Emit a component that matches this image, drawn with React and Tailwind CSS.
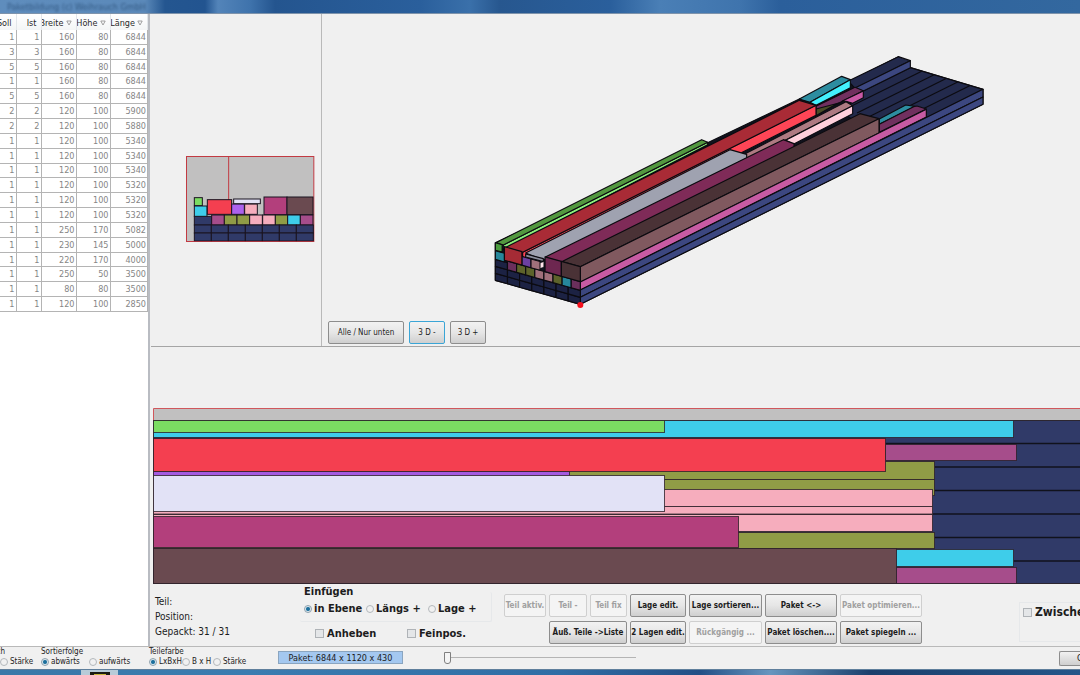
import React from "react";

const PARTS = [
  [1, 1, 160, 80, 6844],
  [3, 3, 160, 80, 6844],
  [5, 5, 160, 80, 6844],
  [1, 1, 160, 80, 6844],
  [5, 5, 160, 80, 6844],
  [2, 2, 120, 100, 5900],
  [2, 2, 120, 100, 5880],
  [1, 1, 120, 100, 5340],
  [1, 1, 120, 100, 5340],
  [1, 1, 120, 100, 5340],
  [1, 1, 120, 100, 5320],
  [1, 1, 120, 100, 5320],
  [1, 1, 120, 100, 5320],
  [1, 1, 250, 170, 5082],
  [1, 1, 230, 145, 5000],
  [1, 1, 220, 170, 4000],
  [1, 1, 250, 50, 3500],
  [1, 1, 80, 80, 3500],
  [1, 1, 120, 100, 2850],
];

const COLUMNS = [
  ["Soll", false],
  ["Ist", false],
  ["Breite", true],
  ["Höhe", true],
  ["Länge", true],
];

function PartsTable() {
  return (
    <table className="h-[298px] w-full table-fixed border-collapse text-[9px] leading-[12px] text-[#858585]">
      <colgroup>
        <col className="w-[16px]" />
        <col className="w-[25px]" />
        <col className="w-[35px]" />
        <col className="w-[34px]" />
        <col />
      </colgroup>
      <thead>
        <tr className="h-[16px] text-[#2a2a2a]">
          {COLUMNS.map(([name, sortable]) => (
            <th key={name} scope="col" className="overflow-hidden border-r border-[#e2e6ea] bg-gradient-to-b from-white to-[#f3f5f6] p-0 font-normal">
              <div className="flex items-center justify-end gap-[2px] overflow-hidden pt-[2px] pr-[4px]">
                <span className="flex min-w-0 justify-end overflow-hidden">{name}</span>
                {sortable && (
                  <svg viewBox="0 0 6 6" className="h-[6px] w-[6px] shrink-0" fill="none" stroke="#8a8a8a" strokeWidth=".8">
                    <path d="M.8 1h4.4L3 5z" />
                  </svg>
                )}
              </div>
            </th>
          ))}
        </tr>
      </thead>
      <tbody>
        {PARTS.map((row, i) => (
          <tr key={i}>
            {row.map((v, j) => (
              <td key={j} className="border-r border-b border-[#b4b4b4] p-0 pr-[1px] text-right">{v}</td>
            ))}
          </tr>
        ))}
      </tbody>
    </table>
  );
}

/* Cross-section of the package: [x, y, width, height, fill] */
const SECTION = [
  [43, 198, 52, 26, "#303a68"],
  [43, 142, 24, 24, "#7bdc62"],
  [43, 167, 38, 31, "#3ecdea"],
  [82, 148, 73, 44, "#f43f50"],
  [155, 161, 38, 31, "#ac62ee"],
  [194, 161, 38, 31, "#f6adbd"],
  [161, 146, 80, 14, "#e2e2f6"],
  [252, 140, 69, 53, "#b33f7c"],
  [321, 140, 78, 53, "#6a4a50"],
  [95, 194, 38, 30, "#a64d8b"],
  [133, 194, 38, 30, "#909c46"],
  [171, 194, 38, 30, "#909c46"],
  [209, 194, 38, 30, "#f6adbd"],
  [248, 194, 38, 30, "#f6adbd"],
  [286, 194, 37, 30, "#909c46"],
  [323, 194, 38, 30, "#3ecdea"],
  [361, 194, 38, 30, "#a64d8b"],
];

function SectionView() {
  return (
    <svg viewBox="18 17 387 258" className="h-[86px] w-[129px]" role="img" aria-label="Querschnitt">
      <rect x="19.5" y="18.5" width="382" height="255" fill="#c1c0c0" stroke="#c23a42" strokeWidth="3" />
      <path d="M146 18V150" stroke="#c23a42" strokeWidth="3" />
      <g stroke="#1b1420" strokeWidth="3">
        {SECTION.map(([x, y, w, h, c], i) => (
          <rect key={i} x={x} y={y} width={w} height={h} fill={c} />
        ))}
        {[224, 248].map((y) =>
          [0, 1, 2, 3, 4, 5, 6].map((n) => (
            <rect key={y + "-" + n} x={43 + n * 51} y={y} width="51" height="24" fill="#303a68" />
          ))
        )}
      </g>
      <path d="M18 273.5H402" stroke="#c23a42" strokeWidth="2" />
    </svg>
  );
}

/* Front-face parts: [offset across, width, base height, height, fill] */
const FRONT = [
  [0, 160, 160, 80, "#1c2243"],
  [160, 120, 160, 100, "#6a2f5c"],
  [280, 120, 160, 100, "#5d632b"],
  [400, 120, 160, 100, "#5d632b"],
  [520, 120, 160, 100, "#a0707a"],
  [640, 120, 160, 100, "#a0707a"],
  [760, 120, 160, 100, "#5d632b"],
  [880, 120, 160, 100, "#26879b"],
  [1000, 120, 160, 100, "#6a2f5c"],
  [0, 120, 240, 100, "#26879b"],
  [0, 90, 345, 85, "#4b9c3f"],
  [350, 120, 260, 100, "#6c40a0"],
  [470, 120, 260, 100, "#a0707a"],
  [120, 230, 260, 155, "#a52b35"],
  [655, 215, 260, 170, "#6d2750"],
  [870, 250, 260, 170, "#4a3236"],
];

function frontQuad(u, w, base, h) {
  const px = (a) => 31 + (255 * a) / 1120;
  const py = (a, z) => 706 + (72 * a) / 1120 - z * 0.262;
  return [
    [px(u), py(u, base)],
    [px(u + w), py(u + w, base)],
    [px(u + w), py(u + w, base + h)],
    [px(u), py(u, base + h)],
  ].map((p) => p.join(",")).join(" ");
}

/* Lengthwise faces from back to front */
const FACES = [
  ["31,593 31,706 286,778 1494,178 1494,133 1276,68 1100,150 680,293", "#11131f"],
  ["943,163 1090,112 1240,35 1276,68 1135,158 993,215", "#11131f"],
  ["660,297 943,162 960,180 690,310", "#11131f"],
  ["1276,68 1494,133 1324,218 1160,262 1090,215 1090,180 1135,138", "#232a4c"],
];
const SEAMS = [[1310, 79], [1346, 90], [1382, 101], [1418, 111], [1454, 122]];
const BLOCKS = [
  ["1090,108 1240,35 1276,47 1110,130", "#232a4c"],
  ["1276,47 1276,68 1135,138 1110,129", "#3c4780"],
  ["943,162 1070,94 1096,104 975,172", "#2d8da0"],
  ["1096,104 1096,128 993,181 975,172", "#43f0fc"],
  ["993,184 1110,127 1135,137 1062,174 993,202", "#71305f"],
  ["1135,138 1135,158 1103,175 1083,169 1072,168", "#ca5aa6"],
  ["993,192 1062,174 1040,185 993,212", "#4a4c27"],
  ["1183,222 1262,180 1290,184 1183,238", "#2d8da0"],
  ["1183,238 1286,185 1296,183 1324,192 1183,262", "#71305f"],
  ["55,600 668,292 668,299 55,614", "#8bee7b"],
  ["33,593 650,284 668,292 55,600", "#52983f"],
  ["760,337 1083,170 1103,182 780,348", "#ae7a82"],
  ["902,286 1103,182 1103,206 925,298", "#ffd0dc"],
  ["113,622 993,181 993,211 113,652", "#ff4556"],
  ["60,608 943,166 993,181 113,622", "#a92b36"],
  ["122,624 735,314 785,328 785,340 175,645", "#9fa2b0"],
  ["181,636 895,284 927,296 927,308 230,653", "#7f2b58"],
  ["230,650 1125,206 1182,221 286,665", "#4a3236"],
  ["286,665 1182,221 1182,264 286,711", "#80595f"],
  ["286,711 1324,193 1324,216 286,735", "#c75ba3"],
  ["286,735 1494,133 1494,156 286,757", "#3c4780"],
  ["286,757 1494,156 1494,178 286,778", "#3c4780"],
];

function PackageView() {
  return (
    <svg viewBox="-486 -93 2271 915" preserveAspectRatio="xMinYMin meet" className="h-[305px] w-[757px] shrink-0" role="img" aria-label="3D-Ansicht des Pakets">
      <g stroke="#0c0b10" strokeWidth="3.5" strokeLinejoin="round">
        {FACES.map(([p, c], i) => (
          <polygon key={i} points={p} fill={c} />
        ))}
        {SEAMS.map(([x, y]) => (
          <path key={x} d={`M${x} ${y}l-230 114`} />
        ))}
        {BLOCKS.map(([p, c], i) => (
          <polygon key={i} points={p} fill={c} />
        ))}
        {[0, 80].map((z) =>
          [0, 1, 2, 3, 4, 5, 6].map((n) => (
            <polygon key={z + "-" + n} points={frontQuad(n * 160, 160, z, 80)} fill="#1c2243" />
          ))
        )}
        {FRONT.map(([u, w, b, h, c], i) => (
          <polygon key={i} points={frontQuad(u, w, b, h)} fill={c} />
        ))}
        <polygon points="122,627 175,641 175,650 122,636" fill="#8b8d9b" />
        <polygon points="166,654 176,650 176,666 166,670" fill="#ffe4ec" strokeWidth="1" />
      </g>
      <circle cx="286" cy="780" r="9" fill="#f5101c" />
    </svg>
  );
}

/* Plan view: [left, top, right, bottom, fill] */
const PLAN = [
  [153, 420, 1013, 437, "#3ecdea"],
  [153, 420, 664, 432, "#7bdc62"],
  [885, 444, 1016, 460, "#a64d8b"],
  [153, 479, 934, 495, "#909c46"],
  [153, 461, 934, 479, "#909c46"],
  [153, 471, 569, 476, "#a35be0"],
  [153, 489, 932, 506, "#f6adbd"],
  [153, 506, 932, 514, "#f6adbd"],
  [153, 514, 932, 531, "#f6adbd"],
  [153, 532, 934, 548, "#909c46"],
  [153, 438, 885, 471, "#f43f50"],
  [153, 475, 664, 511, "#e2e2f6"],
  [153, 516, 738, 547, "#b33f7c"],
  [153, 548, 896, 583, "#6a4a50"],
  [896, 549, 1013, 566, "#3ecdea"],
  [896, 567, 1016, 583, "#a64d8b"],
];

function PlanView() {
  return (
    <svg viewBox="153 408 927 177" preserveAspectRatio="xMinYMin slice" className="h-[177px] w-full" role="img" aria-label="Draufsicht">
      <path d="M153.5 583V408.5H1094V583z" fill="#c1c0c0" stroke="#d0575c" />
      <rect x="153.5" y="420.5" width="940" height="163" fill="#303a68" stroke="#2c2630" />
      <path d="M154 443.5H1080M154 467H1080M154 490.5H1080M154 514H1080M154 537.5H1080M154 561H1080" stroke="#10121c" strokeWidth="1.5" />
      {PLAN.map(([l, t, r, b, c], i) => (
        <rect key={i} x={l + 0.5} y={t + 0.5} width={r - l} height={b - t} fill={c} stroke="#2c1f28" strokeOpacity=".8" />
      ))}
      <path d="M154 514H932" stroke="#2c1f28" strokeOpacity=".5" strokeWidth="1.5" />
    </svg>
  );
}

function Btn({ children, disabled, className = "" }) {
  const look = disabled
    ? "border-[#cfcfcf] bg-[#f4f4f4] text-[#a0a0a0]"
    : "border-[#8d8d8d] bg-gradient-to-b from-[#f2f2f2] via-[#e6e6e6] to-[#cfcfcf] text-[#1c1c1c]";
  return (
    <button type="button" disabled={disabled} className={`flex h-[23px] items-center justify-center rounded-[2px] border whitespace-nowrap text-[8px] leading-[10px] font-bold ${look} ${className}`}>
      {children}
    </button>
  );
}

function Radio({ name, label, checked, className = "" }) {
  return (
    <label className={`flex items-center gap-[2px] whitespace-nowrap ${className}`}>
      <input
        type="radio"
        name={name}
        defaultChecked={checked}
        className="h-[8px] w-[8px] shrink-0 appearance-none rounded-full border border-[#b4b8bc] bg-[#f1f1f1] checked:border-[#8fa1ad] checked:bg-[radial-gradient(circle,#1c6f9c_0_35%,#dbe8ef_60%)]"
      />
      {label}
    </label>
  );
}

function Check({ label, className = "" }) {
  return (
    <label className={`flex items-center gap-[3px] whitespace-nowrap ${className}`}>
      <input type="checkbox" className="h-[9px] w-[9px] shrink-0 appearance-none border border-[#afb3b7] bg-[#e4e6e8]" />
      {label}
    </label>
  );
}

function Controls() {
  return (
    <div className="flex h-[62px] shrink-0 items-start text-[#1c1c1c]">
      <div className="w-[149px] shrink-0 pt-[9px] pl-[4px] text-[10px] leading-[15px]">
        <p>Teil:</p>
        <p>Position:</p>
        <p>Gepackt: 31 / 31</p>
      </div>
      <div className="w-[192px] shrink-0 text-[11px] leading-[13px] font-bold">
        <fieldset className="h-[37px] rounded-[2px] border-r border-b border-[#e6e8ea] pl-[4px]">
          <legend className="block h-[13px]">Einfügen</legend>
          <div className="mt-[4px] flex">
            <Radio name="insert" label="in Ebene" checked className="w-[62px]" />
            <Radio name="insert" label="Längs +" className="w-[62px]" />
            <Radio name="insert" label="Lage +" />
          </div>
        </fieldset>
        <div className="mt-[5px] flex pl-[15px]">
          <Check label="Anheben" className="w-[92px]" />
          <Check label="Feinpos." />
        </div>
      </div>
      <div className="ml-[12px] grid shrink-0 grid-cols-[42px_38px_37px_56px_73px_72px_82px] gap-x-[3px] gap-y-[4px] pt-[9px]">
        <Btn disabled>Teil aktiv.</Btn>
        <Btn disabled>Teil -</Btn>
        <Btn disabled>Teil fix</Btn>
        <Btn>Lage edit.</Btn>
        <Btn>Lage sortieren...</Btn>
        <Btn>Paket &lt;-&gt;</Btn>
        <Btn disabled>Paket optimieren...</Btn>
        <Btn className="col-span-2 col-start-2">Äuß. Teile -&gt;Liste</Btn>
        <Btn>2 Lagen edit.</Btn>
        <Btn disabled>Rückgängig ...</Btn>
        <Btn>Paket löschen....</Btn>
        <Btn>Paket spiegeln ...</Btn>
      </div>
      <div className="mt-[17px] ml-auto h-[40px] w-[61px] overflow-hidden border-t border-b border-l border-[#e6e8ea] pt-[2px] pl-[3px] text-[12px] leading-[14px] font-bold">
        <Check label="Zwischenlage" />
      </div>
    </div>
  );
}

function StatusBar() {
  return (
    <footer className="flex h-[23px] shrink-0 items-start overflow-hidden border-t border-[#b9b9b9] bg-[#f0f0f0] text-[8px] leading-[9px] text-[#1c1c1c]">
      <fieldset className="w-[41px] shrink-0">
        <legend className="flex w-[5px] justify-end overflow-hidden">nach</legend>
        <Radio name="by" label="Stärke" className="mt-[1px]" />
      </fieldset>
      <fieldset className="w-[108px] shrink-0">
        <legend>Sortierfolge</legend>
        <div className="mt-[1px] flex">
          <Radio name="order" label="abwärts" checked className="w-[48px]" />
          <Radio name="order" label="aufwärts" />
        </div>
      </fieldset>
      <fieldset className="w-[129px] shrink-0">
        <legend>Teilefarbe</legend>
        <div className="mt-[1px] flex">
          <Radio name="colour" label="LxBxH" checked className="w-[33px]" />
          <Radio name="colour" label="B x H" className="w-[31px]" />
          <Radio name="colour" label="Stärke" />
        </div>
      </fieldset>
      <output className="mt-[4px] h-[13px] w-[125px] shrink-0 border border-[#8aa5c0] bg-[#a4c8f0] text-center text-[9px] leading-[12px]">
        Paket: 6844 x 1120 x 430
      </output>
      <input
        type="range"
        defaultValue="0"
        aria-label="Position"
        className="mt-[4px] ml-[41px] h-[12px] w-[192px] appearance-none bg-transparent [&::-webkit-slider-runnable-track]:h-px [&::-webkit-slider-runnable-track]:bg-[#b4b4b4] [&::-webkit-slider-thumb]:-mt-[5px] [&::-webkit-slider-thumb]:h-[12px] [&::-webkit-slider-thumb]:w-[7px] [&::-webkit-slider-thumb]:appearance-none [&::-webkit-slider-thumb]:rounded-b-[3px] [&::-webkit-slider-thumb]:border [&::-webkit-slider-thumb]:border-[#7f7f7f] [&::-webkit-slider-thumb]:bg-[#f4f4f4]"
      />
      <button type="button" className="mt-[4px] ml-auto h-[15px] w-[21px] overflow-hidden rounded-l-[2px] border border-r-0 border-[#8d8d8d] bg-gradient-to-b from-[#f2f2f2] to-[#cfcfcf] pl-[17px] text-left text-[9px] leading-[13px]">
        OK
      </button>
    </footer>
  );
}

export default function App() {
  return (
    <div className="flex h-screen flex-col overflow-hidden bg-[#f0f0f0] font-['DejaVu_Sans_Condensed','DejaVu_Sans',sans-serif]">
      <header className="flex h-[14px] shrink-0 items-center overflow-hidden border-b border-[#7e93ab] bg-[linear-gradient(90deg,#5f8dbd_0,#5b89b9_145px,#245690_165px,#225490_205px,#5384b9_218px,#3f73ac_250px,#24558f_275px,#2a5f9c_420px,#3a70aa_470px,#27578f_500px,#2a5f9c_610px,#4a7fb6_660px,#3f74ad_740px,#2b5f9b_780px,#33689f_1080px)] pl-[7px]">
        <h1 className="text-[9px] leading-[12px] text-[#16365c] opacity-60 blur-[1px]">Paketbildung (c) Weihrauch GmbH</h1>
      </header>
      <div className="flex min-h-0 flex-1">
        <aside className="w-[150px] shrink-0 overflow-hidden border-r-2 border-[#b9bcc2] bg-white">
          <PartsTable />
        </aside>
        <main className="flex min-w-0 flex-1 flex-col pl-[1px]">
          <div className="flex h-[333px] shrink-0 overflow-hidden border-b border-[#a5a5a5]">
            <section className="w-[171px] shrink-0 border-r border-[#b9b9b9] pt-[142px] pl-[35px]">
              <SectionView />
            </section>
            <section className="flex min-w-0 flex-1 flex-col overflow-hidden pl-[1px]">
              <PackageView />
              <div className="flex gap-[5px] pt-[2px] pl-[5px]">
                <Btn className="w-[76px] font-normal!">Alle / Nur unten</Btn>
                <Btn className="w-[36px] border-[#3aa5d6]! font-normal!">3 D -</Btn>
                <Btn className="w-[36px] font-normal!">3 D +</Btn>
              </div>
            </section>
          </div>
          <section className="shrink-0 pt-[61px] pl-[2px]">
            <PlanView />
          </section>
          <Controls />
        </main>
      </div>
      <StatusBar />
      <nav aria-label="Taskleiste" className="flex h-[6px] shrink-0 overflow-hidden border-t border-[#5f7f9c] bg-[linear-gradient(90deg,#3a78a8_0,#3a7cb0_250px,#2f6da5_560px,#234f86_700px,#6796bf_770px,#1b3f6c_870px,#24568a_1080px)]">
        <div className="ml-[81px] flex w-[37px] justify-center bg-[#b8cbd8] pt-[2px]">
          <svg viewBox="0 0 20 4" className="h-[4px] w-[20px]">
            <path d="M0 0h20v4H0z" fill="#1c1c14" />
            <path d="M4 2h12v2H4z" fill="#c9b63a" />
          </svg>
        </div>
      </nav>
    </div>
  );
}
